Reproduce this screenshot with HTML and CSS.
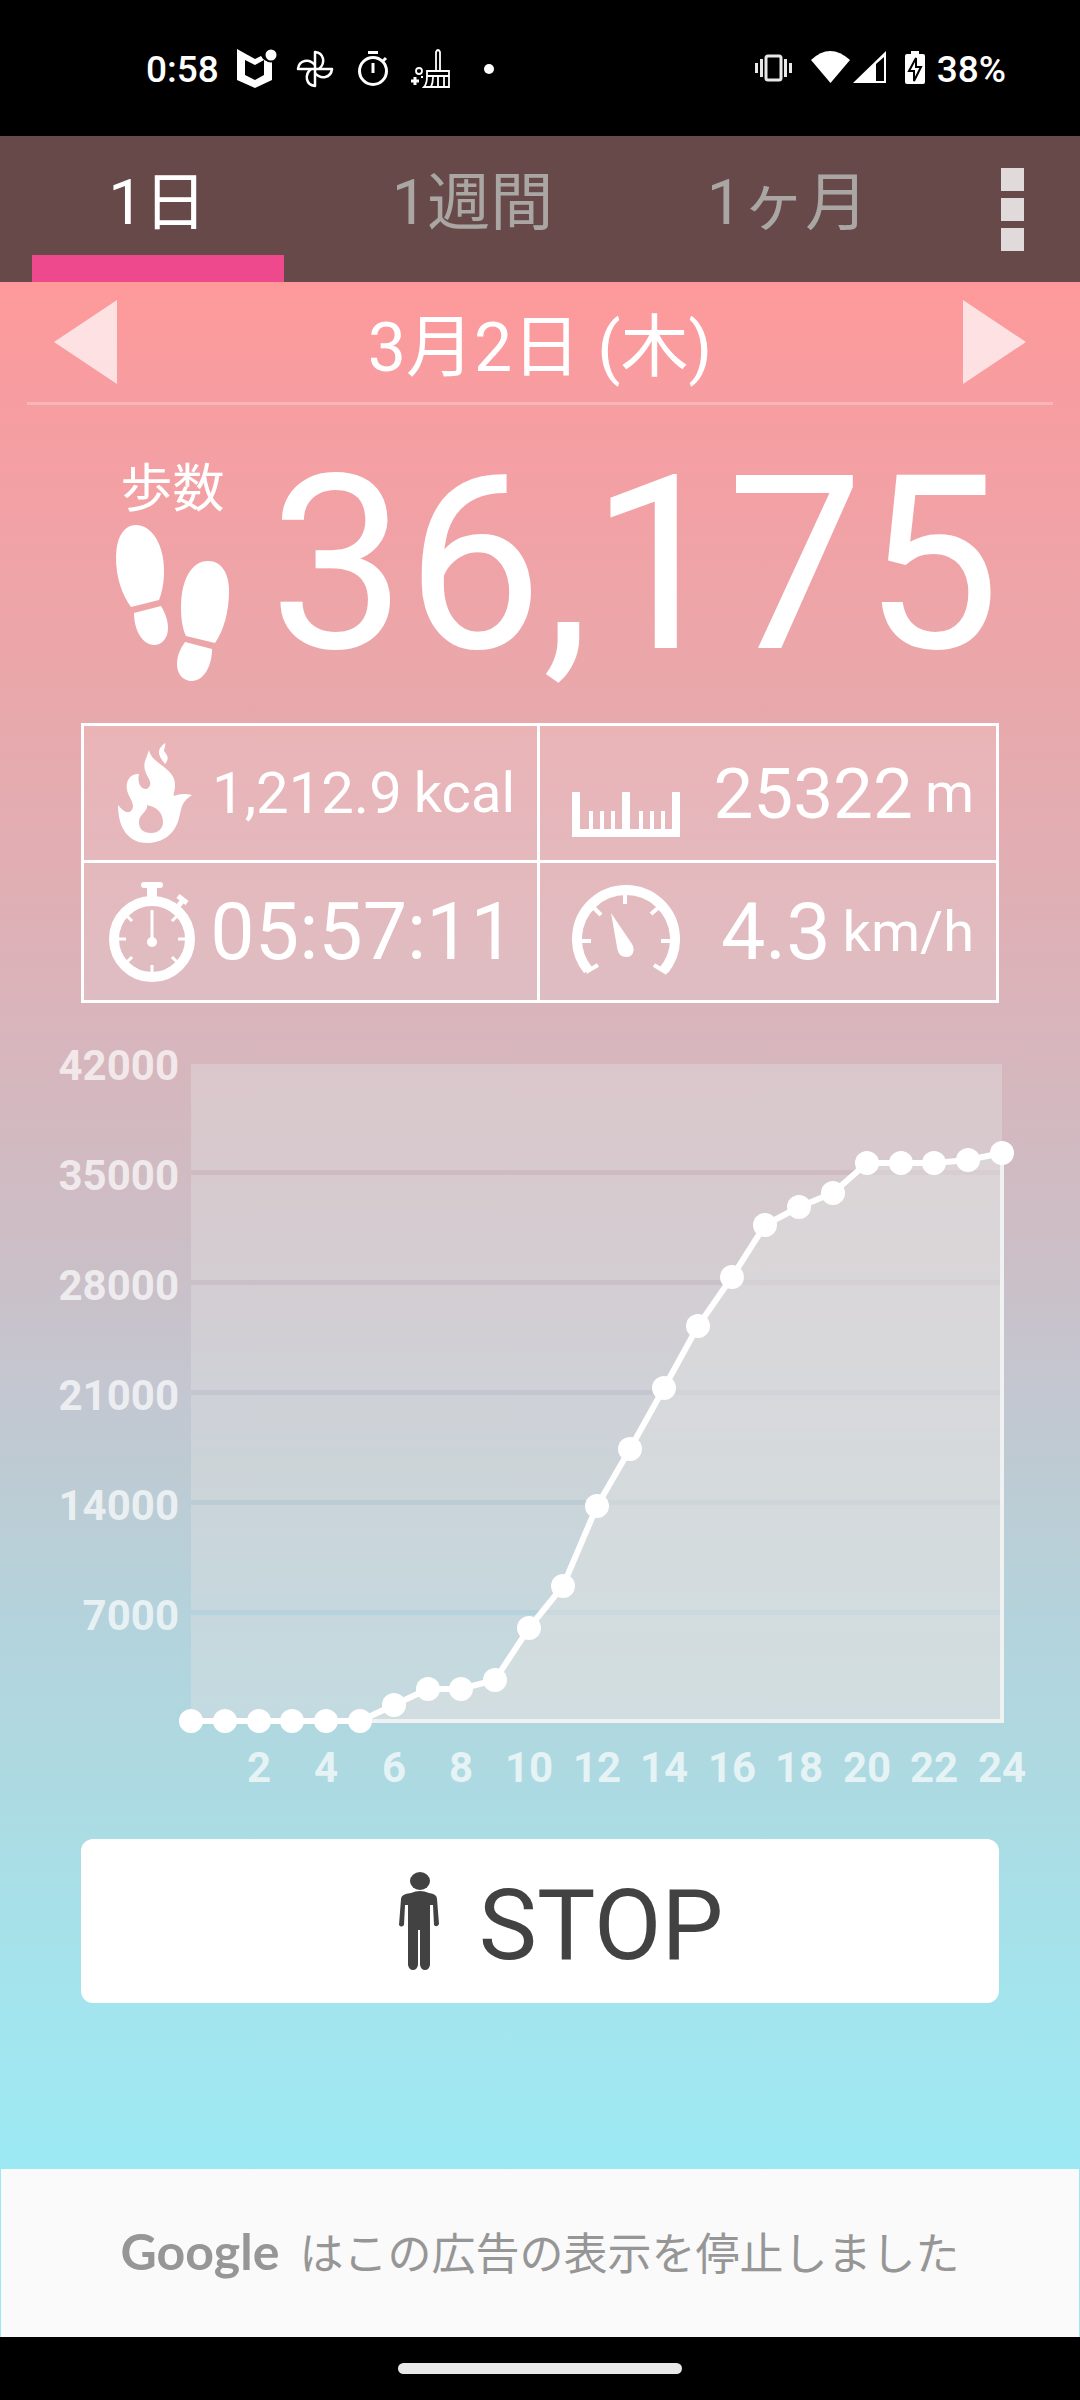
FILE: index.html
```html
<!DOCTYPE html>
<html lang="ja">
<head>
    <meta charset="UTF-8">
    <meta name="viewport" content="width=device-width, initial-scale=1.0">
    <title>歩数計</title>
    <link rel="stylesheet" href="styles.css">
</head>
<body>
    <header class="status-bar">
        <div class="status-left">
            <span>0:58</span>
            <svg class="status-icon" viewBox="0 0 40 40">
                <path fill="#fff" fill-rule="evenodd" d="M0 0 L18 10 L24 7 Q27 13 35 13 V31 L18 39 L0 31 Z M8 11 V26 L18 31 L27 26 V11 L18 16 Z"/>
                <circle cx="34" cy="6" r="7.500" fill="#000"/>
                <circle cx="34" cy="6" r="5.500" fill="#fff"/>
            </svg>
            <svg class="status-icon" viewBox="0 0 40 40" fill="none" stroke="#fff" stroke-width="2.500" stroke-linejoin="round">
                <path d="M20 20 V3 C29 4 31 14 24 20"/>
                <path d="M20 20 H37 C36 29 26 31 20 24"/>
                <path d="M20 20 V37 C11 36 9 26 16 20"/>
                <path d="M20 20 H3 C4 11 14 9 20 16"/>
            </svg>
            <svg class="status-icon" viewBox="0 0 40 40" fill="none" stroke="#fff" stroke-width="3">
                <circle cx="20" cy="22" r="13.500"/>
                <path d="M15 3.500 H25 M20 14 V24 M30 12 L33 9"/>
            </svg>
            <svg class="status-icon" viewBox="0 0 40 40" fill="none" stroke="#fff" stroke-width="1.800">
                <path d="M25 22 V3 Q27 -1 29 3 V22 M16 22 H38 V27 H16 Z M16 27 Q16 35 13 38 H38 V27 M22 28 Q22 34 20 38 M27 28 V38 M33 28 V38"/>
                <circle cx="8" cy="22" r="3"/>
                <path stroke-width="3" d="M4 28 V36 M0 32 H8"/>
                <path d="M10 28 H12"/>
            </svg>
            <svg class="status-icon" viewBox="0 0 40 40"><circle cx="20" cy="20" r="5" fill="#fff"/></svg>
        </div>
        <div class="status-right">
            <svg class="status-icon" viewBox="0 0 40 40" fill="none" stroke="#e8e8e8" stroke-width="3">
                <rect x="13" y="7" width="15" height="24" rx="2"/>
                <path d="M8.500 10 V28 M32.500 10 V28 M3.500 14 V24 M37.500 14 V24"/>
            </svg>
            <svg class="signal-icon" viewBox="0 0 76 40" fill="#fff">
                <path d="M0 11 Q19 -7 39 11 L19.500 34 Z"/>
                <path fill-rule="evenodd" d="M42 34 L75 2 V34 Z M65 15 V32 H73 V8 Z"/>
            </svg>
            <svg class="battery-icon" viewBox="0 0 20 40">
                <path fill="#fff" d="M6 2 H14 V5 H18 Q20 5 20 7 V33 Q20 35 18 35 H2 Q0 35 0 33 V7 Q0 5 2 5 H6 Z"/>
                <path fill="#fff" stroke="#000" stroke-width="2" d="M11 9 V18 H16 L9 32 V22 H4 Z"/>
            </svg>
            <span class="battery-text">38%</span>
        </div>
    </header>

    <nav class="tabs">
        <button class="tab active" type="button">1日</button>
        <button class="tab" type="button">1週間</button>
        <button class="tab" type="button">1ヶ月</button>
        <button class="menu" type="button" aria-label="メニュー">
            <span class="menu-dot"></span>
            <span class="menu-dot"></span>
            <span class="menu-dot"></span>
        </button>
    </nav>

    <main class="content">
        <div class="date-row">
            <button class="arrow" type="button" aria-label="前の日">
                <svg viewBox="0 0 63 84"><path d="M63 0 V84 L0 42 Z"/></svg>
            </button>
            <h1 class="date">3月2日 (木)</h1>
            <button class="arrow" type="button" aria-label="次の日">
                <svg viewBox="0 0 63 84"><path d="M0 0 V84 L63 42 Z"/></svg>
            </button>
        </div>

        <section class="steps">
            <div class="steps-label">
                <span>歩数</span>
                <svg class="feet" viewBox="0 0 113 156" fill="#fff">
                    <path d="M20 0 C36 0 48 20 48 46 C48 58 46 67 43 75 L15 82 C6 70 0 52 0 33 C0 12 8 0 20 0 Z"/>
                    <path d="M18 88 L45 81 C50 89 52 97 52 103 C52 113 46 120 38 120 C27 120 18 106 18 88 Z"/>
                    <path d="M92 36 C106 36 113 49 113 66 C113 86 108 105 99 118 L70 111 C67 105 65 96 65 82 C65 54 76 36 92 36 Z"/>
                    <path d="M69 117 L96 124 C96 142 87 156 76 156 C66 156 61 148 61 139 C61 131 64 124 69 117 Z"/>
                </svg>
            </div>
            <strong class="steps-count">36,175</strong>
        </section>

        <section class="stats">
            <div class="stat">
                <svg class="stat-icon" viewBox="0 0 108 100" fill="#fff">
                    <path d="M66 0 C57 7 59 12 66 21 C71 15 68 12 65 8 C65 5 67 3 66 0 Z"/>
                    <path fill-rule="evenodd" d="M50 7 C53 22 76 24 76 42 C76 49 74 50 75 53 C80 51 86 50 93 52 C81 60 83 66 80 75 C76 91 64 100 48 100 C31 100 19 87 19 62 C24 68 28 71 32 68 C39 60 25 52 28 40 C30 33 34 31 40 31 C38 40 42 47 48 46 C58 38 42 33 46 18 Q48 13 50 7 Z M48 62 C49 69 40 71 40 79 C40 86 44 90 52 90 C60 90 64 85 64 79 C64 69 57 64 48 62 Z"/>
                </svg>
                <span class="stat-text"><span class="value-small">1,212.9</span><span class="unit">kcal</span></span>
            </div>
            <div class="stat">
                <svg class="stat-icon" viewBox="0 0 108 100" fill="none" stroke="#fff">
                    <path stroke-width="8" d="M4 49 V90 H104 V49 M54 49 V90"/>
                    <path stroke-width="4" d="M19 68 V90 M30 68 V90 M41 68 V90 M69 68 V90 M80 68 V90 M91 68 V90"/>
                </svg>
                <span class="stat-text"><span class="value">25322</span><span class="unit">m</span></span>
            </div>
            <div class="stat">
                <svg class="stat-icon" viewBox="0 0 108 100" fill="none" stroke="#fff">
                    <circle cx="53" cy="57" r="38" stroke-width="10"/>
                    <path stroke-width="6" stroke-linecap="round" d="M45 3 H61"/>
                    <path stroke-width="10" d="M53 3 V18"/>
                    <path stroke-width="5" d="M77 27 L84 18 M79 14 L88 21"/>
                    <path stroke-width="3" d="M53 28 V58 M20 57 H27 M79 57 H86 M53 83 V91 M28 34 L33 39 M78 34 L73 39 M28 80 L33 75 M78 80 L73 75"/>
                    <circle cx="53" cy="60" r="5" fill="#fff" stroke="none"/>
                </svg>
                <span class="stat-text"><span class="value-large">05:57:11</span></span>
            </div>
            <div class="stat">
                <svg class="stat-icon" viewBox="0 0 108 100" fill="none" stroke="#fff">
                    <path stroke-width="10" d="M16 88 A49 49 0 1 1 92 88"/>
                    <path stroke-width="4" d="M53 13 V22 M22 26 L29 33 M86 26 L79 32 M8 59 H19 M100 59 H89 M14 90 L26 83 M95 91 L82 83"/>
                    <path fill="#fff" stroke="none" d="M39 31 L60 62 C64 69 60 75 55 75 C49 75 46 72 45 65 Z"/>
                </svg>
                <span class="stat-text"><span class="value-large">4.3</span><span class="unit">km/h</span></span>
            </div>
        </section>

        <svg class="chart" id="chart" viewBox="0 -20 1080 780" role="img" aria-label="歩数グラフ"></svg>

        <button class="stop" type="button">
            <svg class="person" viewBox="0 0 40 98" fill="#424242">
                <ellipse cx="21" cy="9" rx="10" ry="9"/>
                <path d="M12 21 Q21 17 30 21 Q38 22 38 27 L40 52 Q38 56 35 53 L34 33 H31 V93 Q30 98 26 98 Q22 98 21 93 V58 H19 V93 Q18 98 14 98 Q10 98 9 93 V33 H6 L5 53 Q2 56 0 53 L2 27 Q2 22 12 21 Z"/>
            </svg>
            <span class="stop-text">STOP</span>
        </button>
    </main>

    <aside class="ad">
        <span class="ad-logo">Google</span>
        <span>はこの広告の表示を停止しました</span>
    </aside>
    <footer class="nav-bar"><span class="nav-pill"></span></footer>

    <script>
        // cumulative steps for each hour, 0 to 24
        const steps = [0, 0, 0, 0, 0, 0, 1016, 2030, 2030, 2604, 5926, 8594, 13657, 17278, 21216,
            25154, 28286, 31570, 32732, 33622, 35490, 35490, 35490, 35718, 36175];
        const left = 191;
        const right = 1002;
        const bottom = 678;
        const rowHeight = 110;

        const x = hour => Math.round(left + hour * (right - left) / 24);
        const y = value => Math.round(bottom - value * rowHeight / 7000);

        let svg = "";
        for (let i = 0; i < 6; i++) {
            const top = i === 0 ? 21 : 22 + i * rowHeight;
            const end = i === 5 ? bottom : 127 + i * rowHeight;
            svg += `<rect class="band" x="${left}" y="${top}" width="${right - left}" height="${end - top}"/>`;
            svg += `<text class="label-y" x="179" y="${37 + i * rowHeight}">${42000 - i * 7000}</text>`;
        }
        for (let hour = 2; hour <= 24; hour += 2) {
            svg += `<text class="label-x" x="${x(hour)}" y="739">${hour}</text>`;
        }

        const points = steps.map((value, hour) => `${x(hour)},${y(value)}`).join(" ");
        svg += `<polygon class="area" points="${points} ${right},${bottom}"/>`;
        svg += `<polyline class="axis" points="${left},${bottom} ${right},${bottom} ${right},${y(steps[24])}"/>`;
        svg += `<polyline class="line" points="${points}"/>`;
        steps.forEach((value, hour) => {
            svg += `<circle class="dot" cx="${x(hour)}" cy="${y(value)}" r="12"/>`;
        });
        document.getElementById("chart").innerHTML = svg;
    </script>
</body>
</html>
```
FILE: styles.css
```css
* {
    box-sizing: border-box;
}
body {
    margin: 0;
    min-height: 100vh;
    display: flex;
    flex-direction: column;
    background: #9ce9f4;
    color: #fff;
    font-family: Roboto, "Noto Sans CJK JP", sans-serif;
}
button {
    border: 0;
    padding: 0;
    background: none;
    color: inherit;
    font: inherit;
}
svg {
    display: block;
}

/* status bar */
.status-bar {
    display: flex;
    justify-content: space-between;
    align-items: center;
    height: 136px;
    padding: 2px 74px 0 146px;
    background: #000;
    font-size: 37px;
    font-weight: 500;
}
.status-left,
.status-right {
    display: flex;
    align-items: center;
    gap: 18px;
}
.status-icon {
    width: 40px;
    height: 40px;
}
.signal-icon {
    width: 76px;
    height: 40px;
}
.battery-icon {
    width: 20px;
    height: 40px;
}
.battery-text {
    margin-left: -6px;
}

/* tabs */
.tabs {
    display: flex;
    height: 146px;
    background: #674949;
}
.tab {
    position: relative;
    flex: 1;
    padding-bottom: 12px;
    color: #aaa6a4;
    font-size: 63px;
    line-height: 80px;
}
.tab.active {
    color: #fff;
}
.tab.active::after {
    content: "";
    position: absolute;
    left: 32px;
    right: 31px;
    bottom: 0;
    height: 27px;
    background: #ef498e;
}
.menu {
    display: flex;
    flex-direction: column;
    justify-content: center;
    align-items: center;
    gap: 7px;
    width: 135px;
}
.menu-dot {
    width: 23px;
    height: 23px;
    background: #e0dada;
}

/* main screen */
.content {
    flex: 1;
    display: flex;
    flex-direction: column;
    background: linear-gradient(#fe999a, #f79da1 6%, #e9a8ab 22%, #d8b5bc 40%, #cbbfc7 52%, #c3c7d1 59%, #bfcad2 62%, #b4d3dc 71%, #abdce4 82%, #a3e4ed 91%, #9ce9f4);
}
.date-row {
    display: flex;
    justify-content: space-between;
    align-items: center;
    margin: 0 27px;
    padding: 18px 27px;
    border-bottom: 3px solid rgba(255, 255, 255, 0.25);
}
.arrow {
    width: 63px;
    fill: rgba(255, 255, 255, 0.7);
}
.date {
    margin: 0;
    padding-top: 12px;
    font-size: 68px;
    font-weight: 400;
    line-height: 72px;
}
.steps {
    display: flex;
    justify-content: space-between;
    padding: 53px 80px 42px 116px;
}
.steps-label {
    display: flex;
    flex-direction: column;
    align-items: center;
    gap: 3px;
    font-size: 52px;
    line-height: 64px;
}
.feet {
    width: 113px;
}
.steps-count {
    font-size: 243px;
    font-weight: 400;
    line-height: 214px;
}

/* calories, distance, time and speed */
.stats {
    display: grid;
    grid-template-columns: 1fr 1fr;
    grid-auto-rows: 137px;
    margin: 0 81px;
    border: 3px solid #fff;
    background: rgba(255, 255, 255, 0.13);
}
.stat {
    display: flex;
    justify-content: space-between;
    align-items: center;
    padding: 0 22px 0 15px;
}
.stat:nth-child(odd) {
    border-right: 3px solid #fff;
}
.stat:nth-child(even) {
    padding-left: 32px;
}
.stat:nth-child(-n + 2) {
    border-bottom: 3px solid #fff;
}
.stat-icon {
    flex: none;
    width: 108px;
}
.stat-text {
    display: flex;
    align-items: center;
    gap: 12px;
}
.value-small {
    font-size: 58px;
}
.value {
    font-size: 71px;
}
.value-large {
    font-size: 79px;
}
.unit {
    font-size: 56px;
}

/* chart */
.chart {
    width: 100%;
    margin: 20px 0 36px;
}
.band {
    fill: rgba(224, 224, 224, 0.4);
}
.area {
    fill: rgba(224, 224, 224, 0.5);
}
.label-x,
.label-y {
    fill: rgba(255, 255, 255, 0.7);
    font-size: 42px;
    font-weight: 700;
}
.label-x {
    text-anchor: middle;
}
.label-y {
    text-anchor: end;
}
.line {
    fill: none;
    stroke: #fff;
    stroke-width: 6;
}
.axis {
    fill: none;
    stroke: #f0f2f2;
    stroke-width: 4;
}
.dot {
    fill: #fff;
}

/* stop button */
.stop {
    display: flex;
    justify-content: center;
    align-items: center;
    gap: 40px;
    height: 164px;
    margin: 0 81px 40px;
    padding-left: 42px;
    border-radius: 12px;
    background: #fff;
    color: #424242;
}
.person {
    width: 40px;
}
.stop-text {
    padding-top: 10px;
    font-size: 98px;
    line-height: 110px;
}

/* ad and system navigation */
.ad {
    display: flex;
    justify-content: center;
    align-items: center;
    gap: 20px;
    height: 168px;
    margin: 0 1px;
    padding-bottom: 4px;
    background: #fafafa;
    color: #969696;
    font-size: 44px;
}
.ad-logo {
    font-family: Lato, sans-serif;
    font-size: 50px;
    font-weight: 700;
}
.nav-bar {
    display: flex;
    justify-content: center;
    align-items: center;
    height: 63px;
    background: #000;
}
.nav-pill {
    width: 284px;
    height: 11px;
    border-radius: 6px;
    background: #e9e9e9;
}
```
